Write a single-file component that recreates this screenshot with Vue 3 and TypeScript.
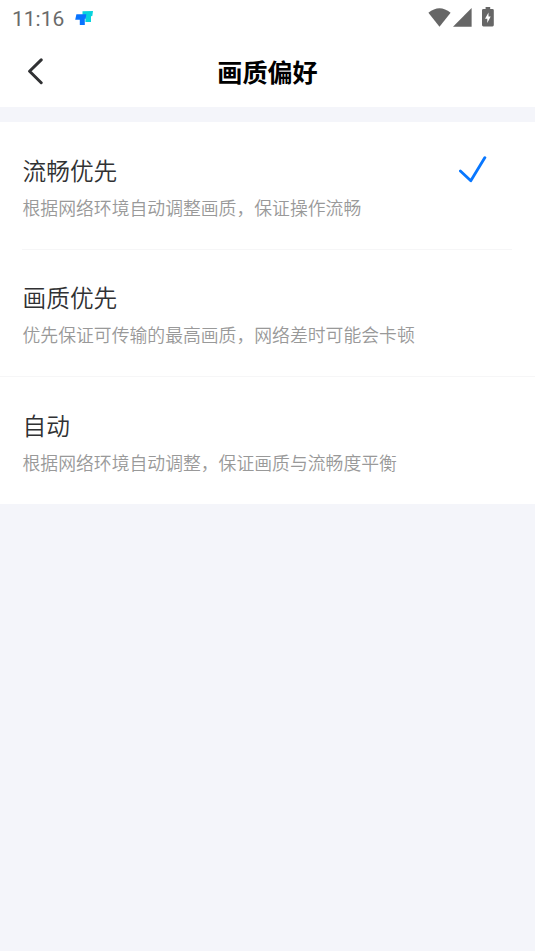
<script setup lang="ts">
import { ref } from 'vue'

interface QualityOption {
  id: string
  title: string
  description: string
}

const options: QualityOption[] = [
  { id: 'smooth', title: '流畅优先', description: '根据网络环境自动调整画质，保证操作流畅' },
  { id: 'quality', title: '画质优先', description: '优先保证可传输的最高画质，网络差时可能会卡顿' },
  { id: 'auto', title: '自动', description: '根据网络环境自动调整，保证画质与流畅度平衡' },
]

const selected = ref('smooth')
</script>

<template>
  <div class="screen">
    <div class="top">
      <div class="status">
        <span class="time">11:16</span>
        <svg class="app-mark" width="18" height="16" viewBox="0 0 18 16">
          <path d="M7.5 0.3 18 0 17.3 5 16 5.3V11H10.4V5H7.5Z" fill="#08d3dd" />
          <path d="M1.4 3.2H11.3L10.7 7.8H9.8V14H4.8V8.8H0.2Z" fill="#0873ff" />
        </svg>
        <div class="indicators">
          <svg class="wifi" width="23" height="19" viewBox="0 0 23 19">
            <path d="M0.4 4.8Q11.5 -4.3 22.6 4.8L11.5 18.8Z" fill="#666" />
          </svg>
          <svg class="signal" width="19" height="19" viewBox="0 0 19 19">
            <path d="M18.6 0V18.7H0Z" fill="#666" />
          </svg>
          <svg class="battery" width="12" height="20" viewBox="0 0 12 20">
            <path d="M3.6 0H8.2V2H10.5Q11.8 2 11.8 3.3V18Q11.8 19.4 10.5 19.4H1.4Q0 19.4 0 18V3.3Q0 2 1.4 2H3.6Z" fill="#666" />
            <path d="M6.5 5.5V9.6H8.7L5.3 16V11.7H3Z" fill="#fff" />
          </svg>
        </div>
      </div>
      <header class="header">
        <button class="back" aria-label="返回">
          <svg width="16" height="28" viewBox="0 0 16 28">
            <path d="M14.2 2.9 2.6 14.3 14.2 25.7" fill="none" stroke="#303133" stroke-width="3" stroke-linecap="round" stroke-linejoin="round" />
          </svg>
        </button>
        <h1 class="heading">画质偏好</h1>
      </header>
    </div>
    <main class="list">
      <div v-for="option in options" :key="option.id" class="option" @click="selected = option.id">
        <div class="copy">
          <div class="title">{{ option.title }}</div>
          <div class="description">{{ option.description }}</div>
        </div>
        <svg v-if="selected === option.id" class="check" width="28" height="28" viewBox="0 0 28 28">
          <path d="M1.4 15 11.8 24.8 25.9 1.6" fill="none" stroke="#0877ff" stroke-width="2.8" stroke-linecap="round" stroke-linejoin="round" />
        </svg>
      </div>
    </main>
  </div>
</template>

<style>
body {
  margin: 0;
  background: #f4f5fa;
}
</style>

<style scoped>
.screen {
  min-height: 951px;
  background: #f4f5fa;
  font-family: Roboto, "Noto Sans CJK SC", sans-serif;
}

.top {
  height: 107px;
  background: #fff;
}

.status {
  display: flex;
  height: 37px;
  padding: 0 41px 0 12px;
  box-sizing: border-box;
}

.time {
  width: 63px;
  color: #6a6a6a;
  font-size: 21px;
  font-weight: 450;
  line-height: 39px;
}

.app-mark {
  margin-top: 11px;
}

.indicators {
  display: flex;
  margin-left: auto;
}

.wifi {
  margin-top: 8px;
}

.signal {
  margin: 8px 10px 0 2px;
}

.battery {
  margin-top: 7px;
}

.header {
  display: grid;
  grid-template-columns: 60px 1fr 60px;
  height: 70px;
  align-items: center;
}

.back {
  display: flex;
  margin: 0 0 2px 27px;
  padding: 0;
  border: 0;
  background: none;
}

.heading {
  margin: 0;
  padding-top: 3px;
  color: #000;
  font-size: 25.1px;
  font-weight: 700;
  line-height: 38px;
  text-align: center;
}

.list {
  margin-top: 15px;
  background: #fff;
}

.option {
  display: flex;
  position: relative;
  height: 127.4px;
  padding: 30px 48px 0 22.5px;
  box-sizing: border-box;
  justify-content: space-between;
}

.option:not(:last-child)::after {
  position: absolute;
  right: 0;
  bottom: 0;
  left: 0;
  height: 1px;
  background: #f6f6f7;
  content: "";
}

.option:first-child::after {
  right: 23px;
  bottom: -1px;
  left: 22px;
}

.copy {
  padding-top: 1.8px;
}

.title {
  color: #303133;
  font-size: 23.7px;
  font-weight: 350;
  line-height: 36px;
}

.description {
  margin-top: 6px;
  color: #999;
  font-size: 17.83px;
  font-weight: 350;
  line-height: 26px;
  white-space: nowrap;
}

.check {
  margin-top: 4px;
}
</style>
